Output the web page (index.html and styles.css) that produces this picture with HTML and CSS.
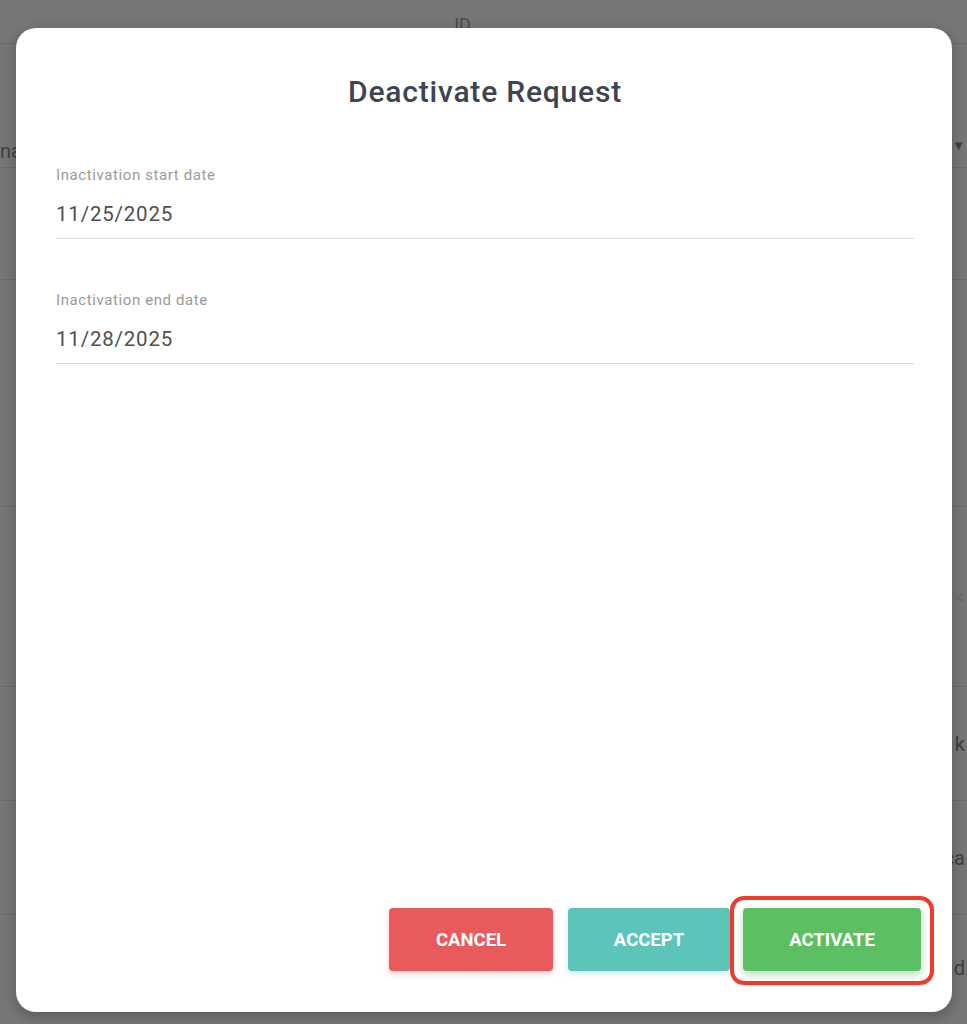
FILE: index.html
```html
<!DOCTYPE html>
<html lang="en">
<head>
  <meta charset="UTF-8" />
  <meta name="viewport" content="width=device-width, initial-scale=1.0"/>
  <title>Deactivate Request</title>
  <link rel="stylesheet" href="styles.css">
</head>
<body>

  <div class="page">
    <div class="row row-head"><span></span><span class="col-id">ID</span><span></span></div>
    <div class="row row-1"><span>na</span><span class="caret">&#9660;</span></div>
    <div class="row row-2"><span></span><span></span></div>
    <div class="row row-3"><span></span><span></span></div>
    <div class="row row-4"><span></span><span class="faint">&lt;</span></div>
    <div class="row row-5"><span></span><span>k</span></div>
    <div class="row row-6"><span></span><span>ca</span></div>
    <div class="row row-7"><span></span><span>d</span></div>
  </div>

  <div class="modal">
    <h2 class="modal-title">Deactivate Request</h2>

    <div class="field">
      <label>Inactivation start date</label>
      <div class="field-value">11/25/2025</div>
    </div>

    <div class="field">
      <label>Inactivation end date</label>
      <div class="field-value">11/28/2025</div>
    </div>

    <div class="actions">
      <button class="btn btn-cancel">CANCEL</button>
      <button class="btn btn-accept">ACCEPT</button>
      <div class="highlight">
        <button class="btn btn-activate">ACTIVATE</button>
      </div>
    </div>
  </div>

</body>
</html>
```

FILE: styles.css
```css
body {
  margin: 0;
  height: 1024px;
  overflow: hidden;
  background: #767676;
  font-family: Roboto, "Liberation Sans", sans-serif;
  position: relative;
}

/* page behind the overlay */
.page {
  color: #3f3f3f;
  font-size: 20px;
}

.row {
  display: flex;
  justify-content: space-between;
  align-items: center;
  border-bottom: 1px solid #6c6c6c;
  padding: 0 2px 0 0;
  box-sizing: border-box;
}

.row-head { height: 44px; align-items: flex-start; }
.row-1 { height: 124px; align-items: flex-end; padding-bottom: 4px; }
.row-2 { height: 112px; }
.row-3 { height: 227px; }
.row-4 { height: 180px; }
.row-5 { height: 114px; }
.row-6 { height: 114px; }
.row-7 { height: 106px; border-bottom: none; }

.col-id {
  margin-top: 14px;
  margin-right: 40px;
  font-size: 18px;
  color: #4a4a4a;
}

.caret { font-size: 13px; margin-bottom: 10px; }
.faint { color: #6a6a6a; }

/* dialog */
.modal {
  position: absolute;
  left: 16px;
  top: 28px;
  width: 936px;
  height: 984px;
  box-sizing: border-box;
  background: #fff;
  border-radius: 20px;
  padding: 46px 38px 41px 40px;
  display: flex;
  flex-direction: column;
  box-shadow: 0 4px 14px rgba(0, 0, 0, 0.25);
}

.modal-title {
  margin: 0 0 56px;
  text-align: center;
  font-size: 30px;
  line-height: 36px;
  font-weight: 500;
  letter-spacing: 0.8px;
  color: #3e4450;
}

.field {
  border-bottom: 1px solid #d9d9d9;
  padding-bottom: 10px;
  margin-bottom: 52px;
}

.field label {
  display: block;
  font-size: 15px;
  line-height: 18px;
  letter-spacing: 0.6px;
  color: #9b9b9b;
  margin-bottom: 16px;
}

.field-value {
  font-size: 20.5px;
  line-height: 28px;
  letter-spacing: 0.8px;
  color: #4f4f4f;
}

.actions {
  margin-top: auto;
  margin-right: -7px;
  display: flex;
  justify-content: flex-end;
  align-items: center;
}

.btn {
  height: 63px;
  border: none;
  border-radius: 4px;
  color: #fff;
  font-family: Roboto, "Liberation Sans", sans-serif;
  font-size: 18.5px;
  font-weight: 700;
  letter-spacing: 0;
  cursor: pointer;
}

.btn-cancel {
  width: 164px;
  background: #e85a5b;
  box-shadow: 0 3px 6px rgba(232, 90, 91, 0.3);
  margin-right: 15px;
}

.btn-accept {
  width: 162px;
  background: #5cc4b9;
  box-shadow: 0 3px 6px rgba(92, 196, 185, 0.3);
  margin-right: 13px;
}

.highlight {
  position: relative;
  display: flex;
}

.highlight::before {
  content: "";
  position: absolute;
  left: -13px;
  top: -12px;
  right: -13px;
  bottom: -14px;
  border: 4px solid #f23b2d;
  border-radius: 14px;
  background: #fff;
}

.btn-activate {
  position: relative;
  width: 178px;
  background: #5cbf62;
  box-shadow: 0 4px 8px rgba(60, 160, 70, 0.35);
}
```
